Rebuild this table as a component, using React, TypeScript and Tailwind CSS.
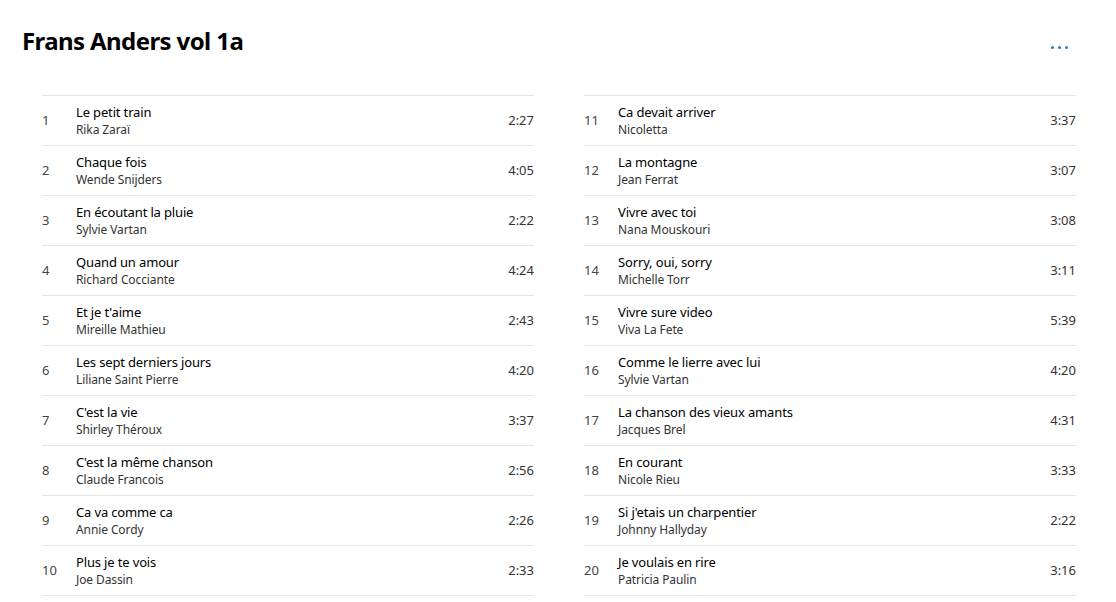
const left = [
    { n: 1, title: 'Le petit train', artist: 'Rika Zaraï', time: '2:27' },
    { n: 2, title: 'Chaque fois', artist: 'Wende Snijders', time: '4:05' },
    { n: 3, title: 'En écoutant la pluie', artist: 'Sylvie Vartan', time: '2:22' },
    { n: 4, title: 'Quand un amour', artist: 'Richard Cocciante', time: '4:24' },
    { n: 5, title: "Et je t'aime", artist: 'Mireille Mathieu', time: '2:43' },
    { n: 6, title: 'Les sept derniers jours', artist: 'Liliane Saint Pierre', time: '4:20' },
    { n: 7, title: "C'est la vie", artist: 'Shirley Théroux', time: '3:37' },
    { n: 8, title: "C'est la même chanson", artist: 'Claude Francois', time: '2:56' },
    { n: 9, title: 'Ca va comme ca', artist: 'Annie Cordy', time: '2:26' },
    { n: 10, title: 'Plus je te vois', artist: 'Joe Dassin', time: '2:33' },
];

const right = [
    { n: 11, title: 'Ca devait arriver', artist: 'Nicoletta', time: '3:37' },
    { n: 12, title: 'La montagne', artist: 'Jean Ferrat', time: '3:07' },
    { n: 13, title: 'Vivre avec toi', artist: 'Nana Mouskouri', time: '3:08' },
    { n: 14, title: 'Sorry, oui, sorry', artist: 'Michelle Torr', time: '3:11' },
    { n: 15, title: 'Vivre sure video', artist: 'Viva La Fete', time: '5:39' },
    { n: 16, title: 'Comme le lierre avec lui', artist: 'Sylvie Vartan', time: '4:20' },
    { n: 17, title: 'La chanson des vieux amants', artist: 'Jacques Brel', time: '4:31' },
    { n: 18, title: 'En courant', artist: 'Nicole Rieu', time: '3:33' },
    { n: 19, title: "Si j'etais un charpentier", artist: 'Johnny Hallyday', time: '2:22' },
    { n: 20, title: 'Je voulais en rire', artist: 'Patricia Paulin', time: '3:16' },
];

type Track = (typeof left)[number];

const TrackList = ({ tracks }: { tracks: Track[] }) => (
    <div className="border-t border-[#e6e6e6]">
        {tracks.map((t) => (
            <div key={t.n} className="flex h-[50px] items-center border-b border-[#e6e6e6]">
                <span className="w-[34px] pt-[1px] text-[13px] text-[#444]">{t.n}</span>
                <div className="flex flex-1 flex-col">
                    <span className="text-[13px] leading-[17px] tracking-[-0.15px] text-black">{t.title}</span>
                    <span className="text-[12px] leading-[17px] tracking-[-0.1px] text-[#333]">{t.artist}</span>
                </div>
                <span className="pt-[1px] text-[13px] text-[#333]">{t.time}</span>
            </div>
        ))}
    </div>
);

export default function App() {
    return (
        <div className="h-[602px] w-[1116px] overflow-hidden bg-white font-['Noto_Sans',sans-serif]">
            <div className="flex items-start justify-between pl-[22px] pr-[48px] pt-[25px]">
                <h1 className="text-[24px] font-bold leading-[32px] tracking-[-0.6px] text-black">
                    Frans Anders vol 1a
                </h1>
                <button className="mt-[21px] flex gap-[4px]">
                    <span className="h-[3px] w-[3px] rounded-full bg-[#2b7cd3]" />
                    <span className="h-[3px] w-[3px] rounded-full bg-[#2b7cd3]" />
                    <span className="h-[3px] w-[3px] rounded-full bg-[#2b7cd3]" />
                </button>
            </div>
            <div className="mt-[38px] grid grid-cols-2 gap-x-[50px] pl-[42px] pr-[40px]">
                <TrackList tracks={left} />
                <TrackList tracks={right} />
            </div>
        </div>
    );
}
